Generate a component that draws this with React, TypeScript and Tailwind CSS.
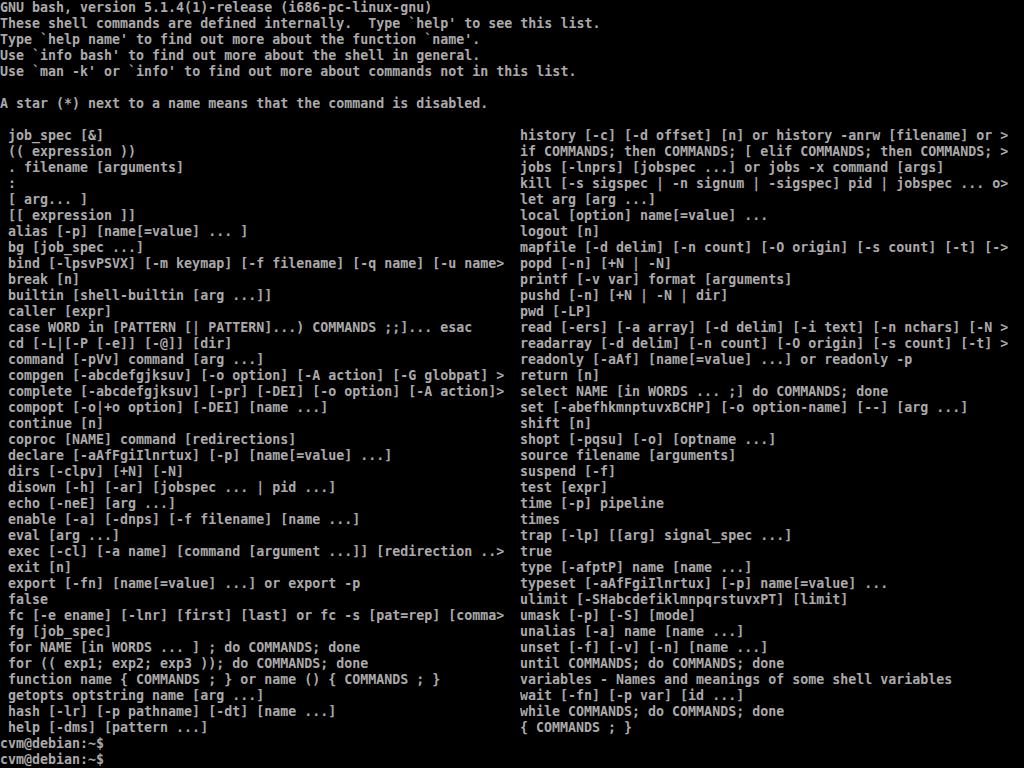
import React from "react";

const header: string[] = [
  "GNU bash, version 5.1.4(1)-release (i686-pc-linux-gnu)",
  "These shell commands are defined internally.  Type `help' to see this list.",
  "Type `help name' to find out more about the function `name'.",
  "Use `info bash' to find out more about the shell in general.",
  "Use `man -k' or `info' to find out more about commands not in this list.",
  "",
  "A star (*) next to a name means that the command is disabled.",
  "",
];

const left: string[] = [
  "job_spec [&]",
  "(( expression ))",
  ". filename [arguments]",
  ":",
  "[ arg... ]",
  "[[ expression ]]",
  "alias [-p] [name[=value] ... ]",
  "bg [job_spec ...]",
  "bind [-lpsvPSVX] [-m keymap] [-f filename] [-q name] [-u name>",
  "break [n]",
  "builtin [shell-builtin [arg ...]]",
  "caller [expr]",
  "case WORD in [PATTERN [| PATTERN]...) COMMANDS ;;]... esac",
  "cd [-L|[-P [-e]] [-@]] [dir]",
  "command [-pVv] command [arg ...]",
  "compgen [-abcdefgjksuv] [-o option] [-A action] [-G globpat] >",
  "complete [-abcdefgjksuv] [-pr] [-DEI] [-o option] [-A action]>",
  "compopt [-o|+o option] [-DEI] [name ...]",
  "continue [n]",
  "coproc [NAME] command [redirections]",
  "declare [-aAfFgiIlnrtux] [-p] [name[=value] ...]",
  "dirs [-clpv] [+N] [-N]",
  "disown [-h] [-ar] [jobspec ... | pid ...]",
  "echo [-neE] [arg ...]",
  "enable [-a] [-dnps] [-f filename] [name ...]",
  "eval [arg ...]",
  "exec [-cl] [-a name] [command [argument ...]] [redirection ..>",
  "exit [n]",
  "export [-fn] [name[=value] ...] or export -p",
  "false",
  "fc [-e ename] [-lnr] [first] [last] or fc -s [pat=rep] [comma>",
  "fg [job_spec]",
  "for NAME [in WORDS ... ] ; do COMMANDS; done",
  "for (( exp1; exp2; exp3 )); do COMMANDS; done",
  "function name { COMMANDS ; } or name () { COMMANDS ; }",
  "getopts optstring name [arg ...]",
  "hash [-lr] [-p pathname] [-dt] [name ...]",
  "help [-dms] [pattern ...]",
];

const right: string[] = [
  "history [-c] [-d offset] [n] or history -anrw [filename] or >",
  "if COMMANDS; then COMMANDS; [ elif COMMANDS; then COMMANDS; >",
  "jobs [-lnprs] [jobspec ...] or jobs -x command [args]",
  "kill [-s sigspec | -n signum | -sigspec] pid | jobspec ... o>",
  "let arg [arg ...]",
  "local [option] name[=value] ...",
  "logout [n]",
  "mapfile [-d delim] [-n count] [-O origin] [-s count] [-t] [->",
  "popd [-n] [+N | -N]",
  "printf [-v var] format [arguments]",
  "pushd [-n] [+N | -N | dir]",
  "pwd [-LP]",
  "read [-ers] [-a array] [-d delim] [-i text] [-n nchars] [-N >",
  "readarray [-d delim] [-n count] [-O origin] [-s count] [-t] >",
  "readonly [-aAf] [name[=value] ...] or readonly -p",
  "return [n]",
  "select NAME [in WORDS ... ;] do COMMANDS; done",
  "set [-abefhkmnptuvxBCHP] [-o option-name] [--] [arg ...]",
  "shift [n]",
  "shopt [-pqsu] [-o] [optname ...]",
  "source filename [arguments]",
  "suspend [-f]",
  "test [expr]",
  "time [-p] pipeline",
  "times",
  "trap [-lp] [[arg] signal_spec ...]",
  "true",
  "type [-afptP] name [name ...]",
  "typeset [-aAfFgiIlnrtux] [-p] name[=value] ...",
  "ulimit [-SHabcdefiklmnpqrstuvxPT] [limit]",
  "umask [-p] [-S] [mode]",
  "unalias [-a] name [name ...]",
  "unset [-f] [-v] [-n] [name ...]",
  "until COMMANDS; do COMMANDS; done",
  "variables - Names and meanings of some shell variables",
  "wait [-fn] [-p var] [id ...]",
  "while COMMANDS; do COMMANDS; done",
  "{ COMMANDS ; }",
];

function Line({ text }: { text: string }) {
  return <div className="h-[16px] whitespace-pre overflow-hidden">{text || "\u00a0"}</div>;
}

export default function App() {
  return (
    <div
      className="w-[1024px] h-[768px] overflow-hidden bg-black text-[#aaaaaa] text-[13.3px] leading-[16px] font-bold"
      style={{ fontFamily: '"DejaVu Sans Mono", "Liberation Mono", monospace' }}
    >
      {header.map((t, i) => (
        <Line key={"h" + i} text={t} />
      ))}
      <div className="grid grid-cols-[520px_504px]">
        {left.map((l, i) => (
          <React.Fragment key={"r" + i}>
            <div className="pl-[8px]">
              <Line text={l} />
            </div>
            <Line text={right[i]} />
          </React.Fragment>
        ))}
      </div>
      <Line text="cvm@debian:~$" />
      <Line text="cvm@debian:~$" />
    </div>
  );
}
